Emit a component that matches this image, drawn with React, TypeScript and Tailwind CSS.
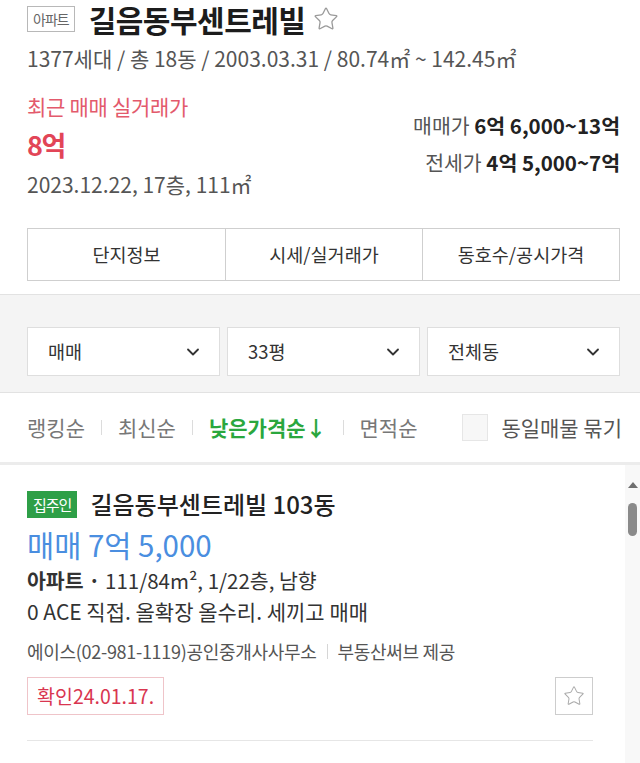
import { ChevronDown, Star } from 'lucide-react'

const SELECTS = ['매매', '33평', '전체동']
const TABS = ['단지정보', '시세/실거래가', '동호수/공시가격']

function Sep() {
  return <span className="mx-[16px] h-[15px] w-px bg-[#dcdcdc]" />
}

export default function App() {
  return (
    <div className="h-[763px] w-[640px] overflow-hidden bg-white font-['Noto_Sans_CJK_KR','Noto_Sans',sans-serif] text-[#222]">
      {/* Header */}
      <div className="pl-[27px] pr-[20px] pt-[2px]">
        <div className="flex h-[34px] items-center">
          <span className="flex h-[26px] items-center border border-[#b8b8b8] px-[5px] text-[14px] leading-none tracking-[-1px] text-[#666]">
            아파트
          </span>
          <h1 className="ml-[14px] text-[30px] font-bold leading-[34px] tracking-[-0.5px] text-[#1c1c1c]">
            길음동부센트레빌
          </h1>
          <Star size={26} strokeWidth={1.2} className="ml-[8px] text-[#9a9a9a]" />
        </div>
        <p className="mt-[9px] text-[21px] leading-[26px] text-[#555]">
          1377세대 / 총 18동 / 2003.03.31 / 80.74㎡ ~ 142.45㎡
        </p>

        {/* Price summary */}
        <div className="mt-[22px] flex justify-between">
          <div>
            <p className="text-[21px] leading-[26px] tracking-[-0.3px] text-[#e35a6c]">최근 매매 실거래가</p>
            <p className="mt-[8px] text-[27px] font-bold leading-[36px] tracking-[-1.5px] text-[#e24557]">8억</p>
            <p className="mt-[8px] text-[21px] leading-[26px] text-[#555]">2023.12.22, 17층, 111㎡</p>
          </div>
          <div className="flex flex-col items-end gap-[7px] pt-[17px] text-[20.5px] leading-[30px]">
            <p className="text-[#555]">
              매매가 <span className="font-bold text-[#222]">6억 6,000~13억</span>
            </p>
            <p className="text-[#555]">
              전세가 <span className="font-bold text-[#222]">4억 5,000~7억</span>
            </p>
          </div>
        </div>

        {/* Tabs */}
        <div className="mt-[31px] grid h-[53px] grid-cols-3 border border-[#cfcfcf]">
          {TABS.map((t, i) => (
            <div
              key={t}
              className={`flex items-center justify-center text-[18.5px] text-[#333] ${i > 0 ? 'border-l border-[#cfcfcf]' : ''}`}
            >
              {t}
            </div>
          ))}
        </div>
      </div>

      {/* Filters */}
      <div className="mt-[13px] grid grid-cols-3 gap-[7px] border-y border-[#e2e2e2] bg-[#f4f4f4] pb-[16px] pl-[27px] pr-[20px] pt-[32px]">
        {SELECTS.map((s) => (
          <div
            key={s}
            className="flex h-[49px] items-center justify-between border border-[#dedede] bg-white pl-[20px] pr-[16px] text-[18.5px] text-[#333]"
          >
            <span>{s}</span>
            <ChevronDown size={20} strokeWidth={2.2} className="text-[#333]" />
          </div>
        ))}
      </div>

      {/* Sort */}
      <div className="flex h-[69px] items-center pl-[27px] pr-[18px] text-[21px] text-[#777]">
        <span>랭킹순</span>
        <Sep />
        <span>최신순</span>
        <Sep />
        <span className="font-bold text-[#2aa73e]">낮은가격순↓</span>
        <Sep />
        <span>면적순</span>
        <div className="ml-auto flex items-center">
          <span className="h-[27px] w-[26px] border border-[#e6e6e6] bg-[#f7f7f7]" />
          <span className="ml-[13px] text-[#555]">동일매물 묶기</span>
        </div>
      </div>
      <div className="h-[3px] bg-[#ececec]" />

      {/* Listing */}
      <div className="flex">
        <div className="flex-1 pl-[27px] pr-[32px]">
          <div className="mt-[24px] flex h-[30px] items-center">
            <span className="flex h-[27px] items-center bg-[#2e9f47] px-[6px] text-[15px] leading-none tracking-[-1px] text-white">
              집주인
            </span>
            <h2 className="ml-[13px] text-[24px] font-medium text-[#222]">길음동부센트레빌 103동</h2>
          </div>
          <p className="mt-[8px] text-[29.5px] leading-[34px] text-[#4a8ee0]">매매 7억 5,000</p>
          <p className="mt-[6px] text-[20.5px] leading-[26px] text-[#333]">
            <span className="font-bold">아파트 · </span>111/84m², 1/22층, 남향
          </p>
          <p className="mt-[5px] text-[21px] leading-[26px] text-[#333]">0 ACE 직접. 올확장 올수리. 세끼고 매매</p>
          <p className="mt-[15px] flex items-center text-[18px] leading-[24px] tracking-[-0.3px] text-[#555]">
            에이스(02-981-1119)공인중개사사무소
            <span className="mx-[10px] h-[15px] w-px bg-[#d6d6d6]" />
            부동산써브 제공
          </p>
          <div className="mt-[14px] flex h-[38px] items-stretch justify-between">
            <span className="flex items-center border border-[#efc4c9] px-[9px] text-[19.5px] text-[#d93650]">
              확인24.01.17.
            </span>
            <span className="flex w-[38px] items-center justify-center border border-[#cdcdcd]">
              <Star size={22} strokeWidth={1.1} className="text-[#aaa]" />
            </span>
          </div>
          <div className="mt-[25px] h-px bg-[#e6e6e6]" />
        </div>

        {/* Scrollbar */}
        <div className="flex h-[300px] w-[15px] flex-col items-center bg-[#f8f8f8] pt-[17px]">
          <span className="h-0 w-0 border-x-[5px] border-b-[6px] border-x-transparent border-b-[#6f6f6f]" />
          <span className="mt-[15px] h-[33px] w-[9px] rounded-full bg-[#8a8a8a]" />
        </div>
      </div>
    </div>
  )
}
